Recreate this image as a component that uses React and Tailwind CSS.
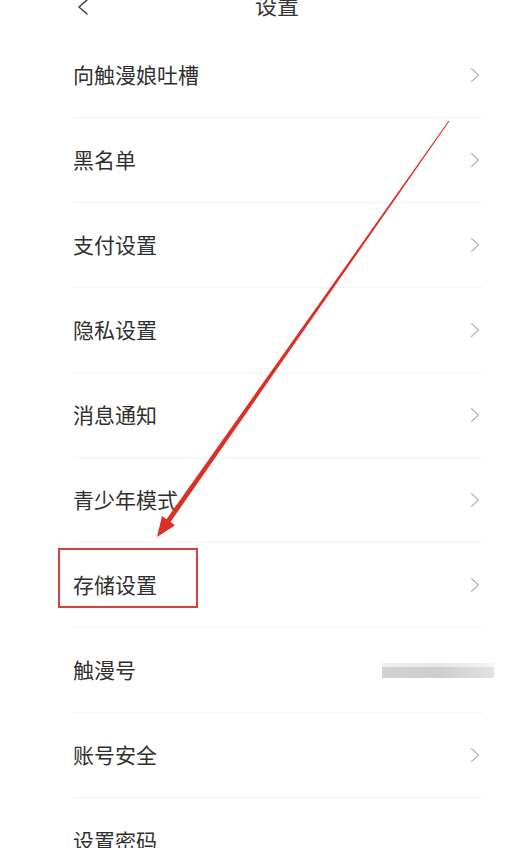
import React from 'react';

const rows = [
  { label: '向触漫娘吐槽' },
  { label: '黑名单' },
  { label: '支付设置' },
  { label: '隐私设置' },
  { label: '消息通知' },
  { label: '青少年模式' },
  { label: '存储设置' },
  { label: '触漫号', blurred: true },
  { label: '账号安全' },
  { label: '设置密码', noArrow: true },
];

const Chevron = () => (
  <svg width="10" height="16" viewBox="0 0 10 16" fill="none">
    <path d="M1.5 1.5 L8.5 8 L1.5 14.5" stroke="#b8b8b8" strokeWidth="1.3" strokeLinecap="round" strokeLinejoin="round" />
  </svg>
);

const SettingRow = ({ label, blurred, noArrow, last }) => (
  <div className="h-[85px] pl-[73px] pr-[42px] flex flex-col">
    <div className="flex-1 flex items-center justify-between">
      <span className="text-[21px] text-[#2f2f2f]">{label}</span>
      {blurred ? (
        <div className="-mr-[14px] w-[112px] flex flex-col">
          <div className="h-[4px] bg-gradient-to-r from-[#f0f0f0] via-[#e6e6e6] to-[#f4f4f4]" />
          <div className="h-[11px] bg-gradient-to-r from-[#d2d2d2] via-[#cdcdcd] to-[#e2e2e2]" />
        </div>
      ) : noArrow ? null : (
        <Chevron />
      )}
    </div>
    {!last && <div className="h-px bg-[#f2f2f2] -mr-[2px]" />}
  </div>
);

export default function App() {
  return (
    <div
      className="relative w-[522px] h-[848px] overflow-hidden bg-white"
      style={{ fontFamily: '"Noto Sans CJK SC", "Noto Sans", sans-serif' }}
    >
      <div className="h-[33px] relative flex justify-center pl-[32px]">
        <div className="absolute left-[77px] -top-[1px]">
          <svg width="12" height="16" viewBox="0 0 12 16" fill="none">
            <path d="M10 1 L2 8 L10 15" stroke="#444444" strokeWidth="1.6" strokeLinecap="round" strokeLinejoin="round" />
          </svg>
        </div>
        <span className="-mt-[7px] text-[22px] leading-[22px] text-[#333333]">设置</span>
      </div>

      <div className="flex flex-col">
        {rows.map((r, i) => (
          <SettingRow key={r.label} {...r} last={i === rows.length - 1} />
        ))}
      </div>

      {/* highlight box */}
      <div className="absolute left-[58px] top-[548px] w-[140px] h-[60px] border-2 border-[#d6403a]" />

      {/* arrow */}
      <svg className="absolute left-0 top-0 pointer-events-none" width="522" height="848" viewBox="0 0 522 848">
        <polygon
          points="449.4,121.3 448.6,120.7 166.5,519.2 162,516 157,537 175,525.2 170.5,522"
          fill="#dc2f26"
        />
      </svg>
    </div>
  );
}
